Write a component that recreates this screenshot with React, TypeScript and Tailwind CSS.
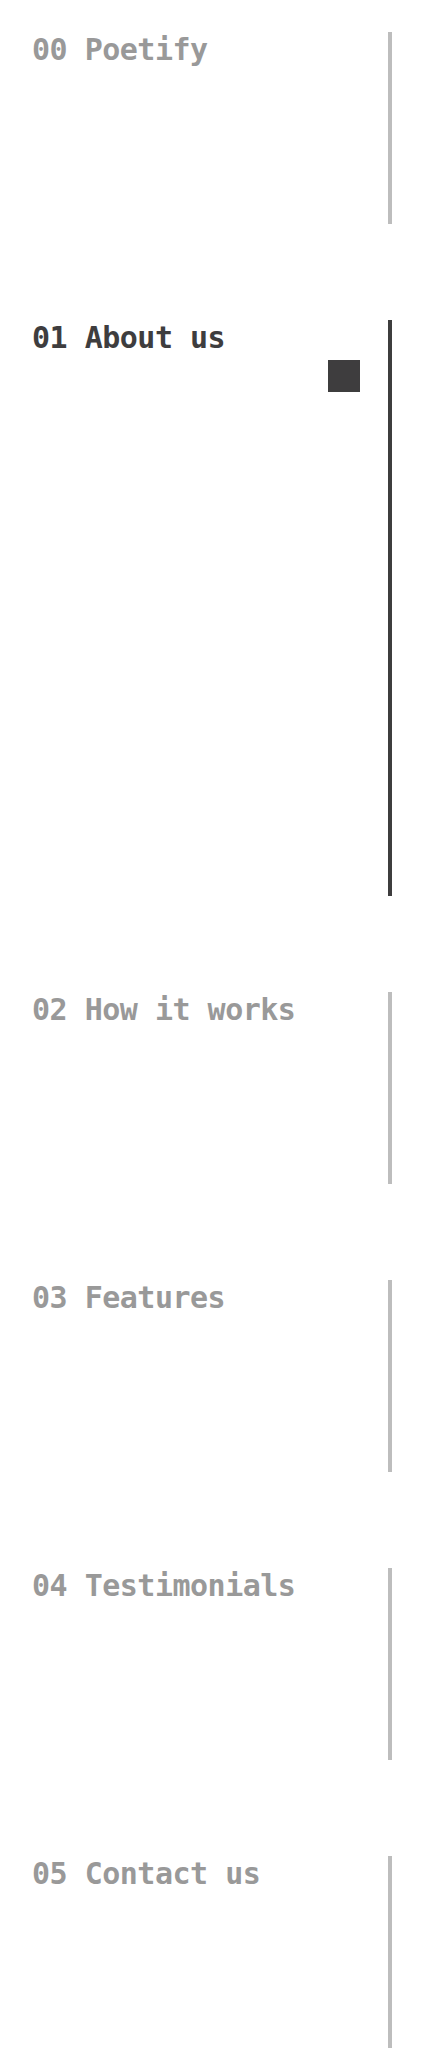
const SECTIONS = [
  { num: "00", title: "Poetify" },
  { num: "01", title: "About us", active: true },
  { num: "02", title: "How it works" },
  { num: "03", title: "Features" },
  { num: "04", title: "Testimonials" },
  { num: "05", title: "Contact us" },
];

function Section({ num, title, active }: { num: string; title: string; active?: boolean }) {
  return (
    <section className="flex pl-8 pr-8 pt-8 pb-16">
      <div className="flex flex-1 flex-col">
        <h2
          className={`font-['DejaVu_Sans_Mono',monospace] text-[30px] font-bold leading-[36px] tracking-[-0.5px] ${
            active ? "text-[#3e3d3e]" : "text-[#999999]"
          }`}
        >
          {num} {title}
        </h2>
      </div>
      <div className="flex items-start">
        {active && <div className="mt-10 mr-7 h-8 w-8 bg-[#3e3d3e]" />}
        <div className={`w-1 ${active ? "h-[576px] bg-[#3e3d3e]" : "h-48 bg-[#bdbdbd]"}`} />
      </div>
    </section>
  );
}

export default function App() {
  return (
    <main className="min-h-[2048px] bg-white">
      {SECTIONS.map((s) => (
        <Section key={s.num} {...s} />
      ))}
    </main>
  );
}
